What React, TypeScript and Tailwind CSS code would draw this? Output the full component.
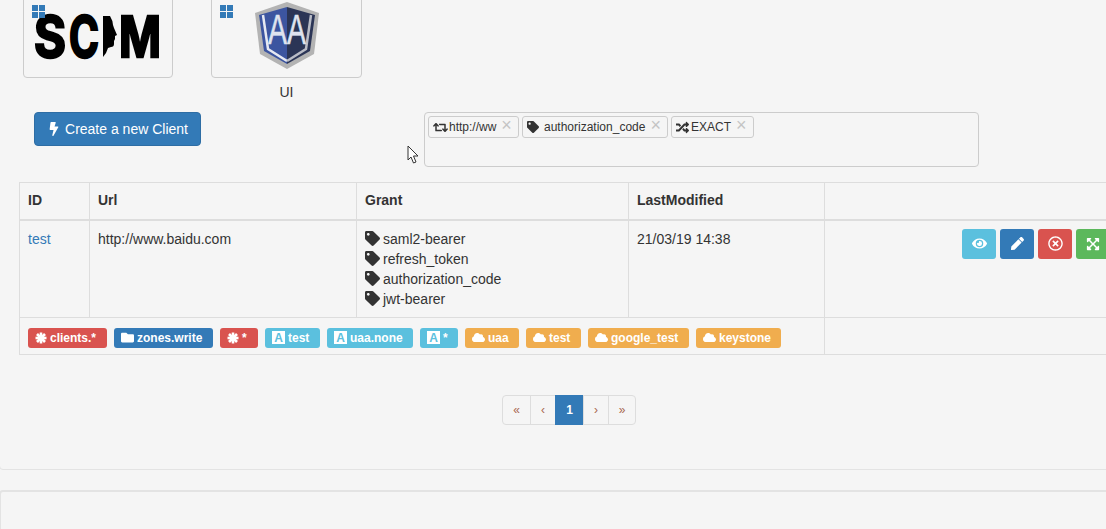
import React from 'react';
import { FaBolt, FaCloud, FaEye, FaFolder, FaPen, FaRandom, FaRegTimesCircle, FaRetweet, FaTag, FaExpandArrowsAlt } from 'react-icons/fa';

const GridMark = () => (
    <svg className="absolute left-[8px] top-[13px]" width="14" height="14" viewBox="0 0 14 14" fill="#337ab7">
        <rect x="0" y="0" width="6" height="6" />
        <rect x="7" y="0" width="6" height="6" />
        <rect x="0" y="7" width="6" height="6" />
        <rect x="7" y="7" width="6" height="6" />
    </svg>
);

const ScimLogo = () => (
    <svg width="130" height="52" viewBox="0 0 130 52" className="mt-[21px] ml-[9px]">
        <g fill="#000" stroke="#000" strokeWidth="2.4" fontFamily="Inter, sans-serif" fontWeight="700" fontSize="56">
            <text x="1" y="44" textLength="32" lengthAdjust="spacingAndGlyphs">S</text>
            <text x="36" y="44" textLength="30" lengthAdjust="spacingAndGlyphs">C</text>
            <text x="86" y="44" textLength="42" lengthAdjust="spacingAndGlyphs">M</text>
        </g>
        <path d="M70 3 h7 q3 5 3 9 l1 3 l3 7 l-2 1 v3 l-1 2 v3 q0 3 -3 3 l-3 1 l-2 5 l-3 4 h-0 z" fill="#000" />
    </svg>
);

const ShieldLogo = () => (
    <svg width="66" height="68" viewBox="0 0 66 68" className="ml-[42px] mt-[10px]">
        <polygon points="33,0 65,11 60,52 33,67 6,52 1,11" fill="#b3b3b3" />
        <polygon points="33,5 5,13 10,49 33,62" fill="#3c55a0" />
        <polygon points="33,5 61,13 56,49 33,62" fill="#2b3556" />
        <polyline points="9,13 14,47 33,59" fill="none" stroke="#e6e9f2" strokeWidth="2.5" />
        <polyline points="57,13 52,47 33,59" fill="none" stroke="#b9bcc6" strokeWidth="2.5" />
        <text x="14" y="42" fill="#dfe3ee" stroke="#dfe3ee" strokeWidth="0.5" fontFamily="'Liberation Sans', sans-serif" fontSize="42" textLength="38" lengthAdjust="spacingAndGlyphs">AA</text>
    </svg>
);

const AsteriskIcon = () => (
    <svg width="12" height="12" viewBox="0 0 12 12" stroke="#fff" strokeWidth="2.6">
        <line x1="6" y1="0.5" x2="6" y2="11.5" />
        <line x1="0.5" y1="6" x2="11.5" y2="6" />
        <line x1="2" y1="2" x2="10" y2="10" />
        <line x1="10" y1="2" x2="2" y2="10" />
    </svg>
);

const Tile = ({ children, className }: { children: React.ReactNode; className: string }) => (
    <div className={`relative h-[87px] border border-[#ccc] rounded-[4px] ${className}`}>
        <GridMark />
        {children}
    </div>
);

const FilterTag = ({ icon, text, x }: { icon: React.ReactNode; text: string; x: string }) => (
    <div className={`flex h-[22px] items-center border border-[#ccc] rounded-[3px] pl-[4px] text-[12px] text-[#333] ${x}`}>
        {icon}
        <span>{text}</span>
        <span className="ml-[5px] mb-[5px] text-[18px] leading-none text-[#c4c4c4]">×</span>
    </div>
);

const Label = ({ icon, text, color }: { icon: React.ReactNode; text: string; color: string }) => (
    <span className={`flex h-[20px] items-center gap-[3px] rounded-[3px] pl-[7px] text-[12px] font-bold text-white ${color}`}>
        {icon}
        {text}
    </span>
);

const LetterIcon = () => (
    <span className="flex h-[13px] w-[13px] items-center justify-center bg-white text-[12px] font-bold leading-none text-[#5bc0de]">A</span>
);

const ActionButton = ({ icon, color }: { icon: React.ReactNode; color: string }) => (
    <button className={`flex h-[30px] w-[34px] items-center justify-center rounded-[3px] text-white ${color}`}>{icon}</button>
);

const PageCell = ({ text, className }: { text: string; className: string }) => (
    <a className={`flex h-[30px] items-center justify-center border border-[#ddd] -ml-px text-[12px] text-[#a9684f] ${className}`}>{text}</a>
);

const grants = ['saml2-bearer', 'refresh_token', 'authorization_code', 'jwt-bearer'];

const App: React.FC = () => {
    return (
        <div className="relative h-[529px] w-[1106px] overflow-hidden bg-[#f5f5f5] font-['Liberation_Sans',Arial,sans-serif] text-[14px] text-[#333]">
            <div className="-ml-[1px] -mt-[10px] h-[480px] w-[1130px] rounded-[4px] border border-[#e3e3e3] pl-[23px]">
                <div className="flex items-start gap-[38px]">
                    <Tile className="w-[150px]">
                        <ScimLogo />
                    </Tile>
                    <div className="w-[151px] text-center">
                        <Tile className="w-[151px] text-left">
                            <ShieldLogo />
                        </Tile>
                        <div className="mt-[4px] h-[20px] leading-[20px]">UI</div>
                    </div>
                </div>

                <div className="mt-[10px] flex items-start">
                    <button className="ml-[11px] flex h-[34px] w-[167px] items-center justify-center gap-[4px] rounded-[4px] border border-[#2e6da4] bg-[#337ab7] text-white">
                        <FaBolt size={14} />
                        Create a new Client
                    </button>
                    <div className="ml-[223px] flex h-[55px] w-[555px] items-start gap-[3px] rounded-[4px] border border-[#ccc] pl-[3px] pt-[3px]">
                        <FilterTag x="w-[91px]" text="http://ww" icon={<FaRetweet size={15} className="mr-[1px] text-[#333]" />} />
                        <FilterTag x="w-[146px]" text="authorization_code" icon={<FaTag size={12} className="mr-[5px] text-[#333]" />} />
                        <FilterTag x="w-[83px]" text="EXACT" icon={<FaRandom size={13} className="mr-[2px] text-[#333]" />} />
                    </div>
                </div>

                <table className="-ml-[4px] mt-[15px] w-[1100px] table-fixed border-collapse">
                    <colgroup>
                        <col className="w-[70px]" />
                        <col className="w-[267px]" />
                        <col className="w-[272px]" />
                        <col className="w-[196px]" />
                        <col />
                    </colgroup>
                    <thead>
                        <tr className="h-[37px] text-left">
                            <th className="border border-b-2 border-[#ddd] px-[8px]">ID</th>
                            <th className="border border-b-2 border-[#ddd] px-[8px]">Url</th>
                            <th className="border border-b-2 border-[#ddd] px-[8px]">Grant</th>
                            <th className="border border-b-2 border-[#ddd] px-[8px]">LastModified</th>
                            <th className="border border-b-2 border-[#ddd] px-[8px]"></th>
                        </tr>
                    </thead>
                    <tbody>
                        <tr className="h-[97px] align-top">
                            <td className="border border-[#ddd] p-[8px] text-[#337ab7]">test</td>
                            <td className="border border-[#ddd] p-[8px]">http://www.baidu.com</td>
                            <td className="border border-[#ddd] p-[8px]">
                                {grants.map((g) => (
                                    <div key={g} className="flex h-[20px] items-center gap-[3px] pt-[1px]">
                                        <FaTag size={15} className="mb-[1px] text-[#333]" />
                                        {g}
                                    </div>
                                ))}
                            </td>
                            <td className="border border-[#ddd] p-[8px]">21/03/19 14:38</td>
                            <td className="border border-[#ddd] p-[8px]">
                                <div className="flex justify-end gap-[4px]">
                                    <ActionButton color="bg-[#5bc0de]" icon={<FaEye size={15} />} />
                                    <ActionButton color="bg-[#337ab7]" icon={<FaPen size={13} />} />
                                    <ActionButton color="bg-[#d9534f]" icon={<FaRegTimesCircle size={15} />} />
                                    <ActionButton color="bg-[#5cb85c]" icon={<FaExpandArrowsAlt size={14} />} />
                                </div>
                            </td>
                        </tr>
                        <tr className="h-[37px]">
                            <td colSpan={4} className="border border-[#ddd] px-[8px]">
                                <div className="mt-[4px] flex gap-[7px]">
                                    <div className="w-[79px]"><Label color="bg-[#d9534f]" text="clients.*" icon={<AsteriskIcon />} /></div>
                                    <div className="w-[99px]"><Label color="bg-[#337ab7]" text="zones.write" icon={<FaFolder size={13} />} /></div>
                                    <div className="w-[38px]"><Label color="bg-[#d9534f]" text="*" icon={<AsteriskIcon />} /></div>
                                    <div className="w-[55px]"><Label color="bg-[#5bc0de]" text="test" icon={<LetterIcon />} /></div>
                                    <div className="w-[86px]"><Label color="bg-[#5bc0de]" text="uaa.none" icon={<LetterIcon />} /></div>
                                    <div className="w-[38px]"><Label color="bg-[#5bc0de]" text="*" icon={<LetterIcon />} /></div>
                                    <div className="w-[54px]"><Label color="bg-[#f0ad4e]" text="uaa" icon={<FaCloud size={13} />} /></div>
                                    <div className="w-[55px]"><Label color="bg-[#f0ad4e]" text="test" icon={<FaCloud size={13} />} /></div>
                                    <div className="w-[101px]"><Label color="bg-[#f0ad4e]" text="google_test" icon={<FaCloud size={13} />} /></div>
                                    <div className="w-[85px]"><Label color="bg-[#f0ad4e]" text="keystone" icon={<FaCloud size={13} />} /></div>
                                </div>
                            </td>
                            <td className="border border-[#ddd]"></td>
                        </tr>
                    </tbody>
                </table>

                <div className="ml-[479px] mt-[40px] flex">
                    <PageCell text="«" className="ml-0 w-[29px] rounded-l-[4px]" />
                    <PageCell text="‹" className="w-[26px]" />
                    <a className="-ml-px flex h-[30px] w-[29px] items-center justify-center bg-[#337ab7] text-[12px] font-bold text-white">1</a>
                    <PageCell text="›" className="w-[26px]" />
                    <PageCell text="»" className="w-[28px] rounded-r-[4px]" />
                </div>
            </div>

            <div className="-ml-[1px] mt-[20px] h-[60px] w-[1130px] rounded-[4px] border-2 border-[#e3e3e3]"></div>

            <svg className="absolute left-[407px] top-[145px]" width="13" height="19" viewBox="0 0 13 19">
                <path d="M1 1 L1 15 L4 12 L6.5 18 L9 17 L6.5 11 L11 11 Z" fill="#fff" stroke="#333" strokeWidth="1" />
            </svg>
        </div>
    );
};

export default App;
